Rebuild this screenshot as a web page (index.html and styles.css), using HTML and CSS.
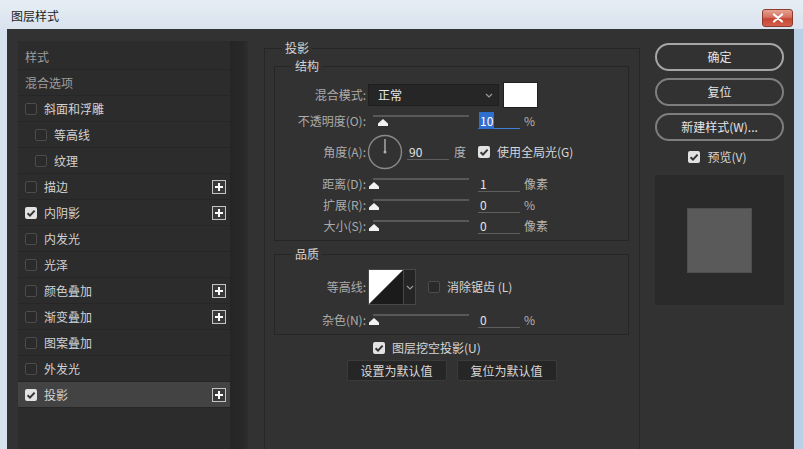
FILE: index.html
```html
<!DOCTYPE html>
<html lang="zh">
<head>
<meta charset="utf-8">
<title>图层样式</title>
<link rel="stylesheet" href="styles.css">
</head>
<body>
<div class="window">
  <div class="titlebar">
    <span class="title">图层样式</span>
    <span class="close"><svg width="12" height="10" viewBox="0 0 12 10"><path d="M2 1.5 L10 8.5 M10 1.5 L2 8.5" stroke="#fff" stroke-width="2.2" stroke-linecap="round"/></svg></span>
  </div>
  <div class="client">
    <div class="sidebar">
      <ul class="list">
        <li class="item head">样式</li>
        <li class="item head">混合选项</li>
        <li class="item"><span class="cb"></span><span class="lbl">斜面和浮雕</span></li>
        <li class="item sub"><span class="cb"></span><span class="lbl">等高线</span></li>
        <li class="item sub"><span class="cb"></span><span class="lbl">纹理</span></li>
        <li class="item"><span class="cb"></span><span class="lbl">描边</span><span class="plus"><svg width="12" height="12" viewBox="0 0 12 12"><path d="M6 2 V10 M2 6 H10" stroke="#fff" stroke-width="2"/></svg></span></li>
        <li class="item"><span class="cb on"><svg width="12" height="12" viewBox="0 0 12 12"><path d="M2.6 6.2 L5 8.6 L9.6 3.6" stroke="#333" stroke-width="2" fill="none"/></svg></span><span class="lbl">内阴影</span><span class="plus"><svg width="12" height="12" viewBox="0 0 12 12"><path d="M6 2 V10 M2 6 H10" stroke="#fff" stroke-width="2"/></svg></span></li>
        <li class="item"><span class="cb"></span><span class="lbl">内发光</span></li>
        <li class="item"><span class="cb"></span><span class="lbl">光泽</span></li>
        <li class="item"><span class="cb"></span><span class="lbl">颜色叠加</span><span class="plus"><svg width="12" height="12" viewBox="0 0 12 12"><path d="M6 2 V10 M2 6 H10" stroke="#fff" stroke-width="2"/></svg></span></li>
        <li class="item"><span class="cb"></span><span class="lbl">渐变叠加</span><span class="plus"><svg width="12" height="12" viewBox="0 0 12 12"><path d="M6 2 V10 M2 6 H10" stroke="#fff" stroke-width="2"/></svg></span></li>
        <li class="item"><span class="cb"></span><span class="lbl">图案叠加</span></li>
        <li class="item"><span class="cb"></span><span class="lbl">外发光</span></li>
        <li class="item selected"><span class="cb on"><svg width="12" height="12" viewBox="0 0 12 12"><path d="M2.6 6.2 L5 8.6 L9.6 3.6" stroke="#333" stroke-width="2" fill="none"/></svg></span><span class="lbl">投影</span><span class="plus"><svg width="12" height="12" viewBox="0 0 12 12"><path d="M6 2 V10 M2 6 H10" stroke="#fff" stroke-width="2"/></svg></span></li>
      </ul>
      <div class="scroll"></div>
    </div>

    <div class="main">
      <fieldset class="group outer">
        <legend>投影</legend>
        <fieldset class="group inner structure">
          <legend>结构</legend>
          <div class="frow blend">
            <span class="flabel">混合模式:</span>
            <div class="select"><span>正常</span><svg width="8" height="5" viewBox="0 0 8 5"><path d="M1 1 L4 4 L7 1" stroke="#9a9a9a" stroke-width="1.2" fill="none"/></svg></div>
            <span class="swatch"></span>
          </div>
          <div class="frow opacity">
            <span class="flabel">不透明度(O):</span>
            <div class="slider"><span class="track"></span><span class="thumb" style="left:9px"><svg width="10" height="7" viewBox="0 0 10 7"><path d="M5 0 L10 4.5 L10 7 L0 7 L0 4.5 Z" fill="#f2f2f2"/></svg></span></div>
            <span class="num active"><span class="sel">10</span></span>
            <span class="unit">%</span>
          </div>
          <div class="frow angle">
            <span class="flabel">角度(A):</span>
            <svg class="dial" width="36" height="36" viewBox="0 0 36 36"><circle cx="18" cy="18" r="16.5" stroke="#8a8a8a" stroke-width="1.4" fill="none"/><path d="M18 18 V5" stroke="#b0b0b0" stroke-width="1.4"/><circle cx="18" cy="18" r="1.5" fill="#b0b0b0"/></svg>
            <span class="num short">90</span>
            <span class="unit deg">度</span>
            <span class="cb on gap"><svg width="12" height="12" viewBox="0 0 12 12"><path d="M2.6 6.2 L5 8.6 L9.6 3.6" stroke="#333" stroke-width="2" fill="none"/></svg></span>
            <span class="clbl">使用全局光(G)</span>
          </div>
          <div class="frow srow first">
            <span class="flabel">距离(D):</span>
            <div class="slider"><span class="track"></span><span class="thumb" style="left:0px"><svg width="10" height="7" viewBox="0 0 10 7"><path d="M5 0 L10 4.5 L10 7 L0 7 L0 4.5 Z" fill="#f2f2f2"/></svg></span></div>
            <span class="num">1</span>
            <span class="unit">像素</span>
          </div>
          <div class="frow srow">
            <span class="flabel">扩展(R):</span>
            <div class="slider"><span class="track"></span><span class="thumb" style="left:0px"><svg width="10" height="7" viewBox="0 0 10 7"><path d="M5 0 L10 4.5 L10 7 L0 7 L0 4.5 Z" fill="#f2f2f2"/></svg></span></div>
            <span class="num">0</span>
            <span class="unit">%</span>
          </div>
          <div class="frow srow">
            <span class="flabel">大小(S):</span>
            <div class="slider"><span class="track"></span><span class="thumb" style="left:0px"><svg width="10" height="7" viewBox="0 0 10 7"><path d="M5 0 L10 4.5 L10 7 L0 7 L0 4.5 Z" fill="#f2f2f2"/></svg></span></div>
            <span class="num">0</span>
            <span class="unit">像素</span>
          </div>
        </fieldset>

        <fieldset class="group inner quality">
          <legend>品质</legend>
          <div class="frow contour-row">
            <span class="flabel">等高线:</span>
            <div class="contour">
              <svg class="curve" width="34" height="34" viewBox="0 0 34 34"><rect width="34" height="34" fill="#ffffff"/><path d="M0 34 L34 0 L34 34 Z" fill="#1b1b1b"/></svg>
              <span class="drop"><svg width="8" height="5" viewBox="0 0 8 5"><path d="M1 1 L4 4 L7 1" stroke="#9a9a9a" stroke-width="1.2" fill="none"/></svg></span>
            </div>
            <span class="cb gap"></span>
            <span class="clbl">消除锯齿 (L)</span>
          </div>
          <div class="frow srow noise">
            <span class="flabel">杂色(N):</span>
            <div class="slider"><span class="track"></span><span class="thumb" style="left:0px"><svg width="10" height="7" viewBox="0 0 10 7"><path d="M5 0 L10 4.5 L10 7 L0 7 L0 4.5 Z" fill="#f2f2f2"/></svg></span></div>
            <span class="num">0</span>
            <span class="unit">%</span>
          </div>
        </fieldset>

        <div class="knockout">
          <span class="cb on"><svg width="12" height="12" viewBox="0 0 12 12"><path d="M2.6 6.2 L5 8.6 L9.6 3.6" stroke="#333" stroke-width="2" fill="none"/></svg></span>
          <span class="clbl">图层挖空投影(U)</span>
        </div>
        <div class="defaults">
          <button class="dbtn">设置为默认值</button>
          <button class="dbtn">复位为默认值</button>
        </div>
      </fieldset>
    </div>

    <div class="actions">
      <button class="pill primary">确定</button>
      <button class="pill">复位</button>
      <button class="pill">新建样式(W)...</button>
      <div class="preview-toggle">
        <span class="cb on"><svg width="12" height="12" viewBox="0 0 12 12"><path d="M2.6 6.2 L5 8.6 L9.6 3.6" stroke="#333" stroke-width="2" fill="none"/></svg></span>
        <span class="clbl">预览(V)</span>
      </div>
      <div class="preview"><span class="preview-square"></span></div>
    </div>
  </div>
</div>
</body>
</html>
```
FILE: styles.css
```css
html, body {
  margin: 0;
  padding: 0;
}
body {
  width: 803px;
  height: 449px;
  overflow: hidden;
  font: 12px/14px "Noto Sans CJK SC", "Noto Sans", sans-serif;
  color: #c8c8c8;
  background: #cfdcea;
}
ul {
  margin: 0;
  padding: 0;
  list-style: none;
}
button {
  font: inherit;
  margin: 0;
  padding: 0;
  cursor: default;
}

.window {
  height: 449px;
  display: flex;
  flex-direction: column;
  background: linear-gradient(90deg, #d6e2ee, #cddbe9 60%, #b9d0e6);
}
.titlebar {
  height: 29px;
  flex: none;
  display: flex;
  justify-content: space-between;
  padding: 0 10px 0 11px;
  background: linear-gradient(#e6edf4, #d9e3ee);
}
.title {
  color: #1c1c1c;
  margin-top: 9px;
}
.close {
  width: 31px;
  height: 18px;
  margin-top: 9px;
  box-sizing: border-box;
  border: 1px solid #8e3a2e;
  border-radius: 3px;
  background: linear-gradient(#e6a393, #d5705f 45%, #c64632 55%, #d1604c);
  display: flex;
  align-items: center;
  justify-content: center;
}

.client {
  flex: 1;
  min-height: 0;
  display: flex;
  margin: 0 9px 0 7px;
  background: #323232;
  overflow: hidden;
}

/* ---- left list ---- */
.sidebar {
  flex: none;
  width: 230px;
  margin: 12px 0 0 11px;
  display: flex;
}
.list {
  width: 212px;
  background: #2c2c2c;
  padding-top: 3px;
}
.item {
  height: 25px;
  border-bottom: 1px solid #262626;
  display: flex;
  align-items: center;
  padding-left: 7px;
  padding-right: 4px;
  color: #d2d2d2;
}
.item.head {
  color: #9e9e9e;
}
.item.sub {
  padding-left: 17px;
}
.item.selected {
  background: #434343;
}
.item .lbl {
  margin-left: 7px;
}
.plus {
  margin-left: auto;
  width: 14px;
  height: 14px;
  box-sizing: border-box;
  border: 1px solid #c4c4c4;
  background: #3a3a3a;
  display: flex;
  align-items: center;
  justify-content: center;
}
.scroll {
  width: 18px;
  background: linear-gradient(90deg, #252525, #282828 70%, #2e2e2e);
}

/* checkboxes */
.cb {
  flex: none;
  width: 12px;
  height: 12px;
  box-sizing: border-box;
  border: 1px solid #4c4c4c;
  border-radius: 2px;
  background: #2a2a2a;
  display: flex;
  align-items: center;
  justify-content: center;
}
.cb.on {
  border: none;
  background: #e2e2e2;
}
.clbl {
  margin-left: 7px;
  color: #d6d6d6;
}

/* ---- middle ---- */
.main {
  flex: none;
  width: 376px;
  margin: 12px 0 0 16px;
}
.group {
  margin: 0;
  min-width: 0;
  border: 1px solid #262626;
}
.group legend {
  padding: 0 3px;
  color: #d4d4d4;
  line-height: 14px;
}
.outer {
  box-sizing: border-box;
  width: 376px;
  min-height: 440px;
  padding: 4px 10px 0 9px;
}
.outer > legend {
  margin-left: 8px;
}
.inner {
  padding: 0 0 4px 0;
}
.inner > legend {
  margin-left: 17px;
}
.structure {
  padding-top: 9px;
}
.quality {
  margin-top: 6px;
  padding-top: 8px;
}

.frow {
  display: flex;
  align-items: center;
}
.flabel {
  flex: none;
  width: 91px;
  text-align: right;
  color: #ababab;
}
.blend {
  height: 26px;
}
.opacity {
  height: 26px;
}
.angle {
  height: 36px;
}
.srow {
  height: 21px;
}
.srow.first {
  margin-top: 3px;
}
.noise {
  margin-top: 4px;
}

.select {
  margin-left: 2px;
  width: 131px;
  height: 22px;
  box-sizing: border-box;
  background: #262626;
  border: 1px solid #1f1f1f;
  display: flex;
  align-items: center;
  justify-content: space-between;
  padding: 0 5px 0 9px;
  color: #e8e8e8;
}
.swatch {
  margin-left: 4px;
  width: 35px;
  height: 26px;
  box-sizing: border-box;
  background: #ffffff;
  border: 1px solid #202020;
}

.slider {
  position: relative;
  flex: none;
  margin-left: 3px;
  width: 100px;
  height: 14px;
}
.track {
  position: absolute;
  left: 4px;
  right: 0;
  top: 1px;
  height: 2px;
  background: #585858;
}
.thumb {
  position: absolute;
  top: 5px;
  width: 10px;
  height: 7px;
  display: flex;
}

.num {
  flex: none;
  margin-left: 9px;
  width: 42px;
  height: 16px;
  box-sizing: border-box;
  border-bottom: 1px solid #5e5e5e;
  padding-left: 2px;
  color: #e4e4e4;
  line-height: 15px;
}
.num.active {
  border-bottom-color: #3d7fd9;
  padding-left: 1px;
}
.num .sel {
  background: #2f6fcf;
  color: #ffffff;
  padding: 0 1px;
}
.num.short {
  margin-left: 4px;
}
.unit {
  margin-left: 4px;
  color: #b4b4b4;
}
.unit.deg {
  margin-left: 5px;
}
.dial {
  flex: none;
  margin-left: 1px;
}
.cb.gap {
  margin-left: 12px;
}

.contour-row {
  height: 36px;
}
.contour {
  margin-left: 2px;
  display: flex;
  border: 1px solid #474747;
  height: 34px;
}
.curve {
  display: block;
}
.drop {
  width: 11px;
  background: #252525;
  border-left: 1px solid #474747;
  display: flex;
  align-items: center;
  justify-content: center;
}

.knockout {
  margin-top: 6px;
  height: 14px;
  display: flex;
  align-items: center;
  padding-left: 99px;
}
.defaults {
  margin-top: 5px;
  display: flex;
  justify-content: center;
  gap: 10px;
}
.dbtn {
  width: 100px;
  height: 21px;
  background: #262626;
  border: 1px solid #3b3b3b;
  border-radius: 2px;
  color: #d8d8d8;
}

/* ---- right column ---- */
.actions {
  flex: none;
  width: 129px;
  margin: 14px 0 0 15px;
  display: flex;
  flex-direction: column;
}
.pill {
  height: 28px;
  margin-bottom: 7px;
  background: #323232;
  border: 2px solid #7e7e7e;
  border-radius: 14px;
  color: #e4e4e4;
}
.pill.primary {
  border-color: #a6a6a6;
}
.preview-toggle {
  margin-top: 2px;
  height: 14px;
  display: flex;
  align-items: center;
  justify-content: center;
  padding-right: 4px;
}
.preview {
  margin-top: 11px;
  height: 130px;
  background: #2a2a2a;
  display: flex;
  align-items: center;
  justify-content: center;
}
.preview-square {
  width: 65px;
  height: 65px;
  box-sizing: border-box;
  background: #5a5a5a;
  border: 1px solid #4e4e4e;
}
```
